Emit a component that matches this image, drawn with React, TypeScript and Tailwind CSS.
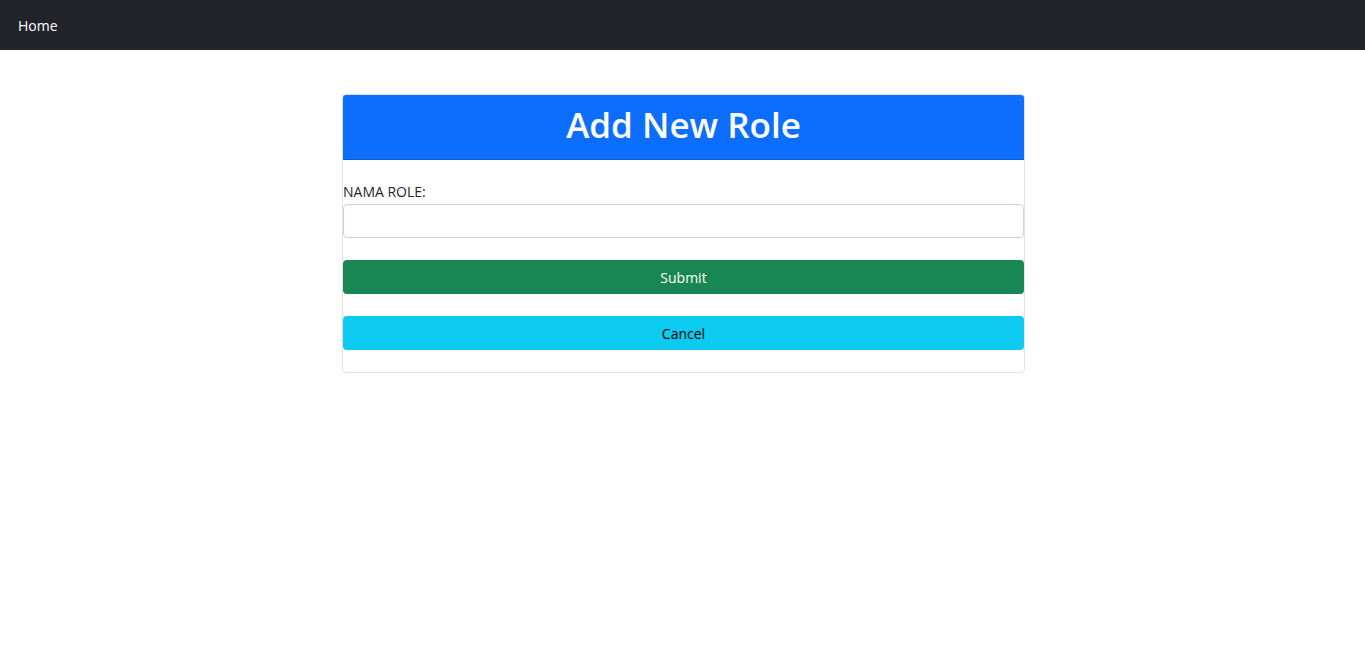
export default function App() {
  return (
    <div className="min-h-screen bg-white font-['Segoe_UI','Open_Sans',sans-serif] text-[#212529]">
      <nav className="flex h-[50px] items-center bg-[#212529] px-[18px]">
        <a href="#" className="text-[14px] text-white">
          Home
        </a>
      </nav>

      <div className="flex justify-center pl-[2px] pt-[44px]">
        <div className="w-[683px] overflow-hidden rounded-[4px] border border-[#dee2e6]">
          <div className="flex h-[65px] items-center justify-center border-b border-[#0b5ed7] bg-[#0d6efd] pb-[5px]">
            <h1 className="text-[35px] font-semibold leading-none text-white">Add New Role</h1>
          </div>
          <form className="flex flex-col pb-[22px] pt-[20px]">
            <label className="h-[24px] text-[14px] leading-[24px]">NAMA ROLE:</label>
            <input
              type="text"
              className="h-[34px] w-full rounded-[4px] border border-[#ced4da] px-3 outline-none"
            />
            <button
              type="button"
              className="mt-[22px] h-[34px] w-full rounded-[4px] bg-[#198754] text-[14px] text-white"
            >
              Submit
            </button>
            <button
              type="button"
              className="mt-[22px] h-[34px] w-full rounded-[4px] bg-[#0dcaf0] text-[14px] text-black"
            >
              Cancel
            </button>
          </form>
        </div>
      </div>
    </div>
  )
}
